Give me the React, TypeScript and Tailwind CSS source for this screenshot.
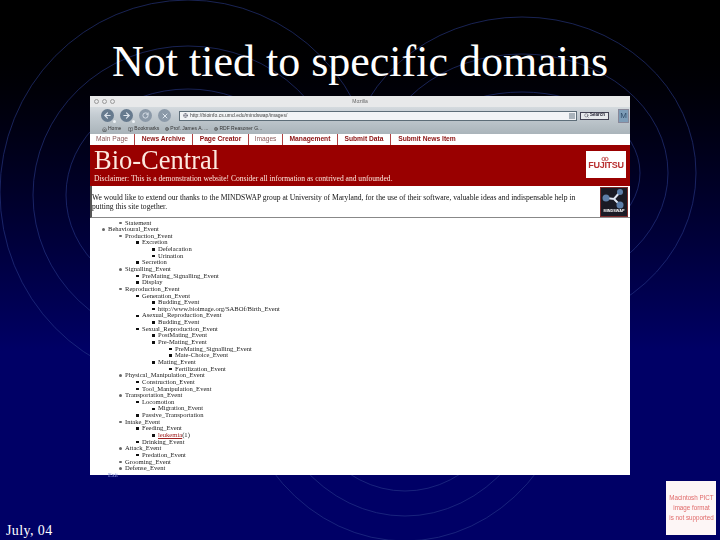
import React from 'react';
import { ArrowLeft, ArrowRight, RotateCw, X, Search, Home, BookOpen, Globe } from 'lucide-react';

const rows: [number, string][] = [
    [1, 'Statement'],
    [0, 'Behavioural_Event'],
    [1, 'Production_Event'],
    [2, 'Excretion'],
    [3, 'Defelacation'],
    [3, 'Urination'],
    [2, 'Secretion'],
    [1, 'Signalling_Event'],
    [2, 'PreMating_Signalling_Event'],
    [2, 'Display'],
    [1, 'Reproduction_Event'],
    [2, 'Generation_Event'],
    [3, 'Budding_Event'],
    [3, 'http://www.bioimage.org/SABOf/Birth_Event'],
    [2, 'Asexual_Reproduction_Event'],
    [3, 'Budding_Event'],
    [2, 'Sexual_Reproduction_Event'],
    [3, 'PostMating_Event'],
    [3, 'Pre-Mating_Event'],
    [4, 'PreMating_Signalling_Event'],
    [4, 'Mate-Choice_Event'],
    [3, 'Mating_Event'],
    [4, 'Fertilization_Event'],
    [1, 'Physical_Manipulation_Event'],
    [2, 'Construction_Event'],
    [2, 'Tool_Manipulation_Event'],
    [1, 'Transportation_Event'],
    [2, 'Locomotion'],
    [3, 'Migration_Event'],
    [2, 'Passive_Transportation'],
    [1, 'Intake_Event'],
    [2, 'Feeding_Event'],
    [3, 'leukemia'],
    [2, 'Drinking_Event'],
    [1, 'Attack_Event'],
    [2, 'Predation_Event'],
    [1, 'Grooming_Event'],
    [1, 'Defense_Event'],
];

const indent = ['pl-[12px]', 'pl-[29px]', 'pl-[46px]', 'pl-[62px]', 'pl-[79px]'];

const tabs = [
    { label: 'Main Page', w: 'w-[45px]', cls: 'text-[#8a5a5a] font-normal' },
    { label: 'News Archive', w: 'w-[58px]', cls: 'text-[#8b1010]' },
    { label: 'Page Creator', w: 'w-[56px]', cls: 'text-[#8b1010]' },
    { label: 'Images', w: 'w-[34px]', cls: 'text-[#8a5a5a] font-normal' },
    { label: 'Management', w: 'w-[55px]', cls: 'text-[#8b1010]' },
    { label: 'Submit Data', w: 'w-[53px]', cls: 'text-[#8b1010]' },
    { label: 'Submit News Item', w: 'w-[72px]', cls: 'text-[#8b1010] border-r-0' },
];

const Backdrop = () => (
    <svg className="absolute inset-0" width="720" height="540" fill="none" stroke="#2a3a8c" strokeWidth="0.6">
        <ellipse cx="188" cy="192" rx="188" ry="192" />
        <ellipse cx="188" cy="195" rx="155" ry="149" />
        <ellipse cx="188" cy="195" rx="122" ry="106" />
        <ellipse cx="522" cy="173" rx="174" ry="156" />
        <ellipse cx="522" cy="173" rx="146" ry="119" />
        <ellipse cx="522" cy="173" rx="118" ry="81" />
        <ellipse cx="405" cy="345" rx="173" ry="196" />
        <ellipse cx="405" cy="345" rx="146" ry="171" />
        <ellipse cx="405" cy="345" rx="118" ry="146" />
    </svg>
);

const NavButton = ({ children, light, dot }: { children: React.ReactNode; light?: boolean; dot?: boolean }) => (
    <div className={`relative w-[13px] h-[13px] rounded-full flex items-center justify-center text-[#dfe6ee] ${light ? 'bg-[#8b99a8]' : 'bg-[#667a8e]'}`}>
        {children}
        {dot && <span className="absolute -right-[2px] -bottom-[1px] w-[3px] h-[3px] rounded-full bg-[#eef2f6]" />}
    </div>
);

const Chrome = () => (
    <div className="bg-linear-to-b from-[#eceef0] via-[#c4ccd2] to-[#aab4ba] font-['Liberation_Sans',sans-serif] blur-[0.4px]">
        <div className="h-[11px] relative flex items-center justify-center bg-[#e8e9ea] rounded-t-[2px]">
            <div className="absolute left-[4px] top-[3px] flex gap-[3px]">
                <span className="w-[5px] h-[5px] rounded-full border border-[#9a9a9a]" />
                <span className="w-[5px] h-[5px] rounded-full border border-[#9a9a9a]" />
                <span className="w-[5px] h-[5px] rounded-full border border-[#9a9a9a]" />
            </div>
            <span className="text-[5px] text-[#666]">Mozilla</span>
        </div>
        <div className="h-[17px] flex items-center pl-[11px] pr-[1px]">
            <div className="flex gap-[6px]">
                <NavButton dot><ArrowLeft size={9} strokeWidth={3} /></NavButton>
                <NavButton dot><ArrowRight size={9} strokeWidth={3} /></NavButton>
                <NavButton light><RotateCw size={7} strokeWidth={3} /></NavButton>
                <NavButton light><X size={8} strokeWidth={3} /></NavButton>
            </div>
            <div className="ml-[8px] w-[399px] h-[10px] bg-[#f2f4f6] border border-[#5d6d78] flex items-center pl-[3px] gap-[2px]">
                <Globe size={5} className="text-[#556]" />
                <span className="text-[5px] text-[#444] flex-1">http://bioinfo.cs.umd.edu/mindswap/images/</span>
                <span className="w-[6px] h-[6px] bg-[#a9b3bb] mr-[1px]" />
            </div>
            <div className="ml-[3px] w-[29px] h-[8px] bg-[#e6e9ec] border border-[#445] flex items-center justify-center gap-[1px]">
                <Search size={5} className="text-[#334]" />
                <span className="text-[4.5px] font-bold text-[#223]">Search</span>
            </div>
            <div className="ml-[9px] w-[11px] h-[14px] bg-[#7d9db8] border border-[#889] flex items-center justify-center overflow-hidden">
                <span className="text-[8px] text-[#2e4a66]">M</span>
            </div>
        </div>
        <div className="h-[10px] flex items-center pl-[12px] gap-[6px] text-[5px] text-[#333]">
            <span className="flex items-center gap-[1px]"><Home size={5} />Home</span>
            <span className="flex items-center gap-[1px] ml-[1px]"><BookOpen size={5} />Bookmarks</span>
            <span className="flex items-center gap-[1px]"><Globe size={4} />Prof. James A. ...</span>
            <span className="flex items-center gap-[1px]"><Globe size={4} />RDF Reasoner G...</span>
        </div>
    </div>
);

const TabBar = () => (
    <div className="h-[11px] bg-white flex font-['Liberation_Sans',sans-serif] text-[6.7px] font-bold blur-[0.3px]">
        {tabs.map((t) => (
            <div key={t.label} className={`${t.w} ${t.cls} border-r border-[#b04040] flex items-center justify-center`}>
                {t.label}
            </div>
        ))}
    </div>
);

const Banner = () => (
    <div className="h-[41px] bg-[#990000] flex justify-between pl-[4px] pr-[4px] pt-[2px] text-[#fde8de] blur-[0.3px]">
        <div>
            <div className="text-[26.5px] leading-[27px]">Bio-Central</div>
            <div className="text-[7.55px] leading-[8px] mt-[1px]">Disclaimer: This is a demonstration website! Consider all information as contrived and unfounded.</div>
        </div>
        <div className="relative w-[40px] h-[27px] mt-[4px] bg-white flex items-center justify-center">
            <span className="font-['Liberation_Sans',sans-serif] font-bold text-[#b83030] text-[9px] tracking-[-0.3px] pt-[3px]">FUJITSU</span>
            <svg className="absolute left-[15px] top-[5px]" width="8" height="8" viewBox="0 0 8 8" fill="none" stroke="#b83030" strokeWidth="0.8">
                <circle cx="2.5" cy="3" r="1.6" />
                <circle cx="5.5" cy="3" r="1.6" />
            </svg>
        </div>
    </div>
);

const Thanks = () => (
    <div className="h-[32px] flex justify-between border-b border-[#888] border-l-2 border-l-[#555] pr-[2px] blur-[0.3px]">
        <p className="text-[7.6px] leading-[9px] text-[#111] w-[490px] pt-[7px]">
            We would like to extend our thanks to the MINDSWAP group at University of Maryland, for the use of their software, valuable ideas and indispensable help in putting this site together.
        </p>
        <div className="w-[28px] h-[30px] mt-[1px] bg-[#1a1a24] border border-[#7a2a2a] flex flex-col items-center">
            <svg width="24" height="21" viewBox="0 0 24 21" fill="none">
                <path d="M4 10L12 11L18 4M12 11L18 17" stroke="#dfe6f2" strokeWidth="2" />
                <circle cx="4" cy="10" r="3.5" fill="#5d7ea8" />
                <circle cx="18" cy="4" r="3" fill="#5d7ea8" />
                <circle cx="18" cy="17" r="3.5" fill="#5d7ea8" />
            </svg>
            <span className="font-['Liberation_Sans',sans-serif] font-bold text-[3.8px] text-white">MINDSWAP</span>
        </div>
    </div>
);

const Tree = () => (
    <ul className="pt-[1.5px] text-[6.6px] leading-[6.65px] text-[#222] blur-[0.3px]">
        {rows.map(([level, label], i) => (
            <li key={i} className={`${indent[level]} h-[6.65px] flex items-center gap-[3.5px] whitespace-nowrap`}>
                <span className={`w-[2.5px] h-[2.5px] shrink-0 ${level > 1 ? 'bg-[#111]' : 'bg-[#666] rounded-full'}`} />
                {label === 'leukemia' ? (
                    <span><span className="text-[#a02020] underline">leukemia</span>(1)</span>
                ) : (
                    label
                )}
            </li>
        ))}
        <li className="pl-[18px] h-[6.65px] text-[#8a96d8] text-[6px]">Exit</li>
    </ul>
);

export default function App() {
    return (
        <div className="relative w-[720px] h-[540px] overflow-hidden flex flex-col bg-linear-to-b from-black to-[#000066] to-65% font-['Liberation_Serif',serif]">
            <Backdrop />
            <h1 className="relative h-[96px] pt-[36px] text-center text-white text-[44px] leading-[52px]">
                Not tied to specific domains
            </h1>
            <div className="relative ml-[90px] w-[540px] h-[379px] bg-white">
                <Chrome />
                <TabBar />
                <Banner />
                <Thanks />
                <Tree />
            </div>
            <div className="relative flex-1 flex justify-between items-end pl-[6px] pr-[4px] pb-[2px]">
                <span className="text-white text-[14px] leading-[14px] tracking-[0.4px]">July, 04</span>
                <div className="w-[50px] h-[54px] mb-[3px] bg-[#fdf6f6] flex items-center justify-center text-center font-['Liberation_Sans',sans-serif] text-[8px] leading-[10px] whitespace-nowrap text-[#e06a6a] blur-[0.3px] overflow-hidden">
                    <span className="scale-x-[0.78] shrink-0">Macintosh PICT<br />image format<br />is not supported</span>
                </div>
            </div>
        </div>
    );
}
